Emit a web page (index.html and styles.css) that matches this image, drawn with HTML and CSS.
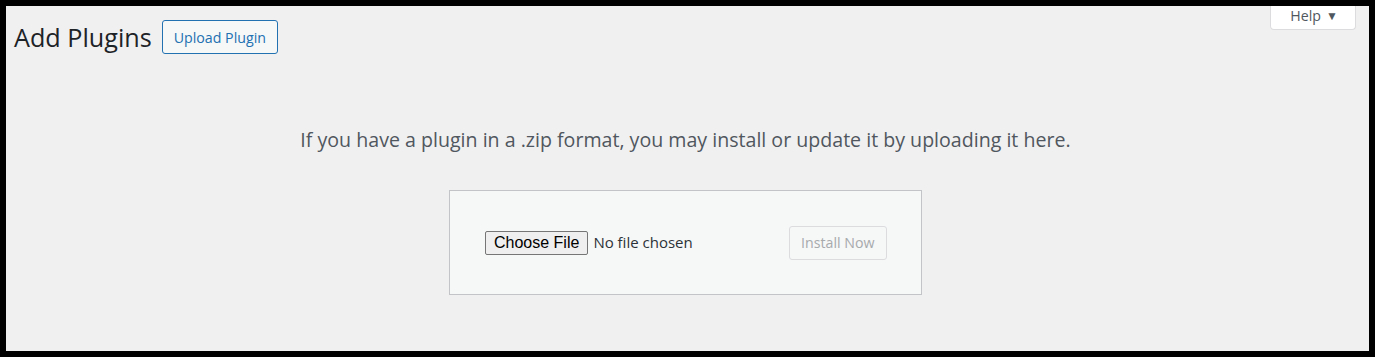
FILE: index.html
```html
<!DOCTYPE html>
<html lang="en">
<head>
<meta charset="utf-8">
<title>Add Plugins</title>
<link rel="stylesheet" href="styles.css">
</head>
<body>
<div class="screen">
  <header class="topbar">
    <div class="title-group">
      <h1 class="page-title">Add Plugins</h1>
      <button class="btn btn-outline" type="button">Upload Plugin</button>
    </div>
    <button class="help-tab" type="button">Help <span class="caret">&#9660;</span></button>
  </header>
  <main class="upload">
    <p class="install-help">If you have a plugin in a .zip format, you may install or update it by uploading it here.</p>
    <form class="upload-form">
      <label class="file-field">
        <input class="file-input" type="file" name="pluginzip">
      </label>
      <button class="btn btn-disabled" type="submit" disabled>Install Now</button>
    </form>
  </main>
</div>
</body>
</html>
```

FILE: styles.css
```css
html, body {
  margin: 0;
  padding: 0;
  background: #000;
}

body {
  padding: 6px;
  box-sizing: border-box;
  width: 1375px;
  height: 357px;
}

.screen {
  background: #f0f0f1;
  height: 345px;
  width: 1363px;
  display: flex;
  flex-direction: column;
  font-family: "Open Sans", "Noto Sans", sans-serif;
  color: #1d2327;
  overflow: hidden;
}

.topbar {
  display: flex;
  justify-content: space-between;
  align-items: flex-start;
  padding: 0 13px 0 8px;
}

.title-group {
  display: flex;
  align-items: center;
  gap: 10px;
  padding-top: 14px;
}

.page-title {
  margin: 0;
  font-size: 25.2px;
  font-weight: 400;
  line-height: 34px;
  color: #1d2327;
}

.btn {
  font-family: inherit;
  font-size: 14.2px;
  height: 34px;
  padding: 0 11px;
  border-radius: 3px;
  background: #f6f7f7;
  cursor: pointer;
  box-sizing: border-box;
}

.btn-outline {
  border: 1px solid #2271b1;
  color: #2271b1;
}

.btn-disabled {
  border: 1px solid #dcdcde;
  color: #a7aaad;
  cursor: default;
  padding: 0 11.5px;
}

.help-tab {
  font-family: inherit;
  font-size: 14.2px;
  color: #50575e;
  background: #fff;
  border: 1px solid #dcdcde;
  border-top: none;
  border-radius: 0 0 4px 4px;
  height: 24px;
  width: 86px;
  padding: 1px 0 0 2px;
  box-sizing: border-box;
  line-height: 18px;
  display: flex;
  align-items: flex-start;
  justify-content: center;
}

.caret {
  font-size: 12px;
  margin-left: 5px;
  line-height: 18px;
}

.upload {
  display: flex;
  flex-direction: column;
  align-items: center;
  padding-right: 4px;
}

.install-help {
  margin: 72px 0 0;
  font-size: 19.6px;
  line-height: 28px;
  color: #50575e;
  text-align: center;
}

.upload-form {
  margin-top: 36px;
  width: 473px;
  height: 105px;
  box-sizing: border-box;
  padding: 0 34px 0 35px;
  background: #f6f7f7;
  border: 1px solid #c3c4c7;
  display: flex;
  justify-content: space-between;
  align-items: center;
}

.file-field {
  display: flex;
  align-items: center;
}

.file-input {
  font-family: inherit;
  font-size: 15px;
  color: #2c3338;
  width: 212px;
}

.file-input::file-selector-button {
  font-family: "Liberation Sans", Arial, sans-serif;
  font-size: 16px;
  color: #000;
  background: #efefef;
  border: 1px solid #767676;
  border-radius: 2px;
  padding: 1px 8px;
  height: 24px;
  margin-right: 5px;
}
```
